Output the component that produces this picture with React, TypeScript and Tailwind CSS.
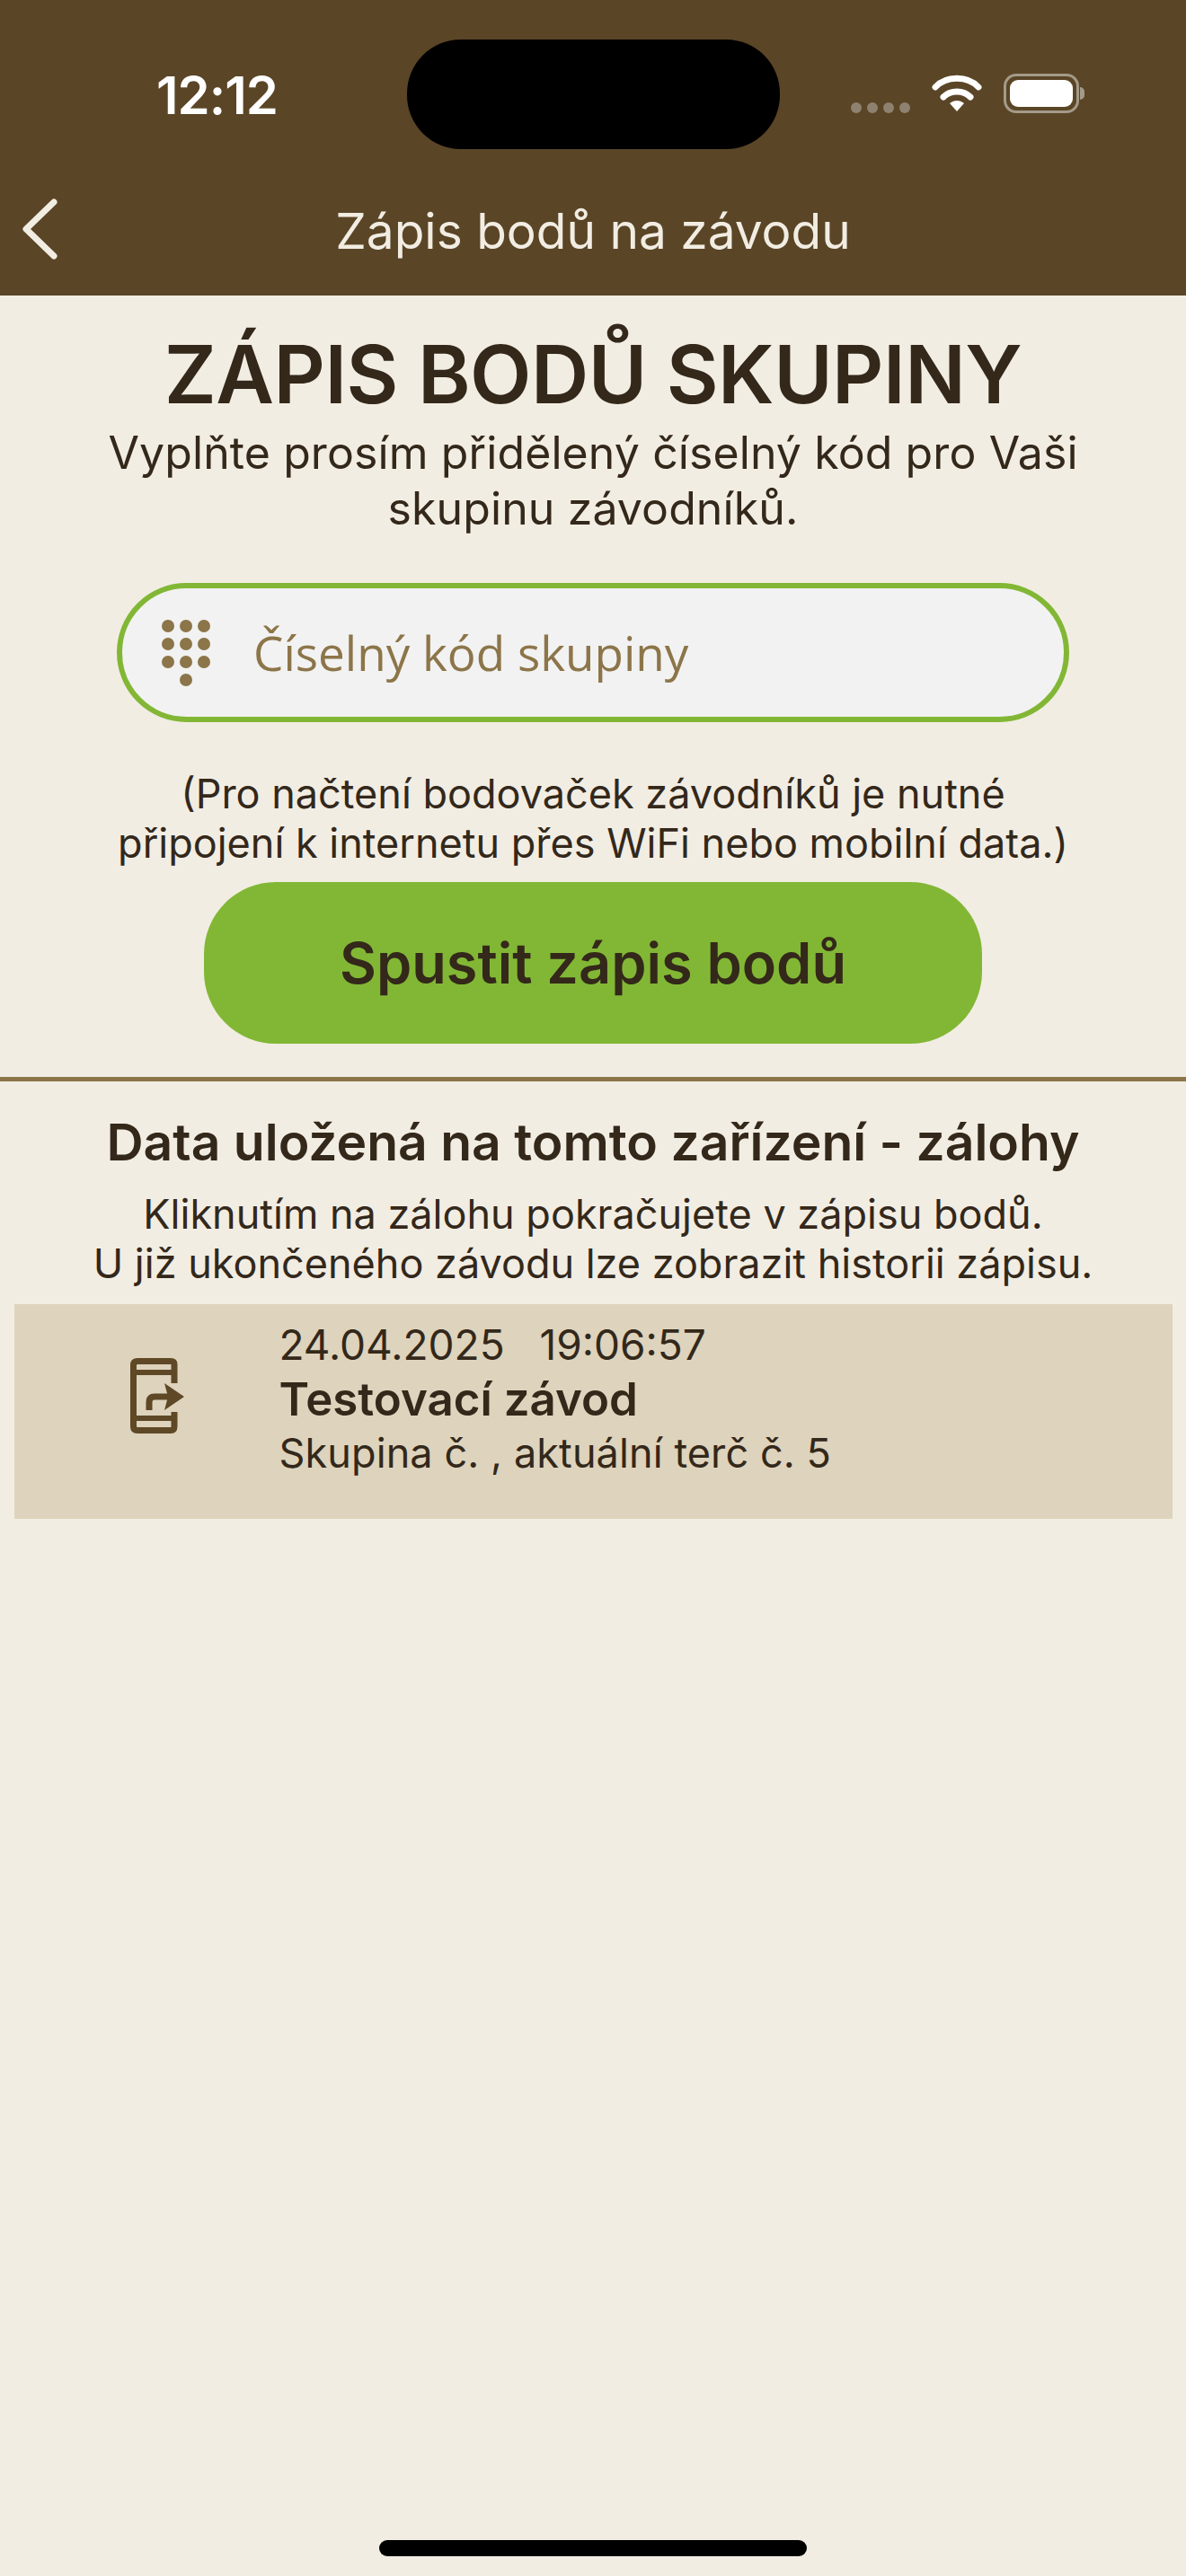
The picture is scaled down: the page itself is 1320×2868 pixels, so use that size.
import React from 'react';

const StatusBar = () => {
  return (
    <div className="relative flex h-[200px] items-start justify-between pl-[174px] pr-[113px] pt-[72px]">
      <span className="font-['Inter',sans-serif] text-[58px] leading-[68px] font-semibold tracking-[-1px] text-white">
        12:12
      </span>
      <div className="absolute left-[453px] top-[44px] h-[122px] w-[415px] rounded-[60px] bg-black" />
      <div className="flex items-center pt-[10px]">
        <div className="mr-[24px] mt-[32px] flex gap-[6px]">
          <div className="h-[12px] w-[12px] rounded-full bg-[#8d8270]" />
          <div className="h-[12px] w-[12px] rounded-full bg-[#8d8270]" />
          <div className="h-[12px] w-[12px] rounded-full bg-[#8d8270]" />
          <div className="h-[12px] w-[12px] rounded-full bg-[#8d8270]" />
        </div>
        <svg width="56" height="44" viewBox="0 0 56 44" className="mr-[24px]">
          <path d="M4 15 C16 2 40 2 52 15" fill="none" stroke="#fff" strokeWidth="7" strokeLinecap="round" />
          <path d="M13 26 C21 18 35 18 43 26" fill="none" stroke="#fff" strokeWidth="7" strokeLinecap="round" />
          <path d="M20 33 C25 29 31 29 36 33 L28 42 Z" fill="#fff" />
        </svg>
        <div className="flex items-center">
          <div className="h-[44px] w-[84px] rounded-[14px] border-[3px] border-[#a49a88] p-[4px]">
            <div className="h-full w-full rounded-[9px] bg-white" />
          </div>
          <div className="ml-[1px] h-[14px] w-[5px] rounded-r-full bg-[#a49a88]" />
        </div>
      </div>
    </div>
  );
};

const KeypadIcon = () => {
  return (
    <svg width="56" height="76" viewBox="0 0 56 76" fill="#8c7549">
      <circle cx="8" cy="8" r="7" />
      <circle cx="28" cy="8" r="7" />
      <circle cx="48" cy="8" r="7" />
      <circle cx="8" cy="28" r="7" />
      <circle cx="28" cy="28" r="7" />
      <circle cx="48" cy="28" r="7" />
      <circle cx="8" cy="48" r="7" />
      <circle cx="28" cy="48" r="7" />
      <circle cx="48" cy="48" r="7" />
      <circle cx="28" cy="68" r="7" />
    </svg>
  );
};

const PhoneForwardIcon = () => {
  return (
    <svg width="60" height="84" viewBox="0 0 60 84" fill="none" stroke="#5e4826" strokeWidth="7">
      <path d="M49 28 V7 Q49 3.500 45 3.500 H8 Q3.500 3.500 3.500 8 V76 Q3.500 80.500 8 80.500 H45 Q49 80.500 49 76 V60" strokeLinejoin="round" />
      <path d="M4 16 H49 M4 67 H49" strokeWidth="6" />
      <path d="M21 58 V49 Q21 43 27 43 H44" strokeWidth="7" />
      <path d="M38 28 L60 43 L38 58 L42 43 Z" fill="#5e4826" stroke="none" />
    </svg>
  );
};

const App = () => {
  return (
    <div className="flex h-[2868px] w-[1320px] flex-col overflow-hidden bg-[#f2ede3] font-['Inter',sans-serif] text-[#33281a]">
      <header className="h-[329px] bg-[#5a4526]">
        <StatusBar />
        <div className="relative flex h-[115px] items-center justify-center pb-[2px]">
          <svg width="44" height="70" viewBox="0 0 44 70" fill="none" stroke="#f2ede3" strokeWidth="7" strokeLinecap="round" strokeLinejoin="round" className="absolute left-[22px] top-[20px]">
            <path d="M38 5 L7 35 L38 65" />
          </svg>
          <h1 className="text-[55px] leading-[64px] font-normal text-[#f2ede3]">Zápis bodů na závodu</h1>
        </div>
      </header>

      <main className="flex flex-col items-center">
        <h2 className="mt-[42px] text-[89px] leading-[92px] font-semibold tracking-[-0.5px]">ZÁPIS BODŮ SKUPINY</h2>
        <p className="mt-[10px] text-center text-[50px] leading-[62px] tracking-[0.1px]">
          Vyplňte prosím přidělený číselný kód pro Vaši
          <br />
          skupinu závodníků.
        </p>

        <div className="mt-[52px] flex h-[155px] w-[1060px] items-center rounded-[78px] border-[6px] border-[#82b735] bg-[#f2f2f2] pl-[43px]">
          <KeypadIcon />
          <span className="ml-[47px] font-['Open_Sans',sans-serif] text-[53px] leading-[64px] text-[#8c7549]">
            Číselný kód skupiny
          </span>
        </div>

        <p className="mt-[52px] text-center text-[45px] leading-[55px]">
          (Pro načtení bodovaček závodníků je nutné
          <br />
          připojení k internetu přes WiFi nebo mobilní data.)
        </p>

        <button className="mt-[16px] flex h-[180px] w-[866px] items-center justify-center rounded-[80px] bg-[#82b735] text-[63px] font-semibold">
          Spustit zápis bodů
        </button>

        <div className="mt-[37px] h-[5px] w-full bg-[#8c7549]" />

        <h3 className="mt-[36px] text-[57px] leading-[64px] font-semibold">Data uložená na tomto zařízení - zálohy</h3>
        <p className="mt-[20px] text-center text-[45px] leading-[55px]">
          Kliknutím na zálohu pokračujete v zápisu bodů.
          <br />
          U již ukončeného závodu lze zobrazit historii zápisu.
        </p>

        <div className="mt-[18px] flex h-[239px] w-[1289px] items-start bg-[#ded3bc]">
          <div className="w-[129px] shrink-0 pt-[60px] pl-[129px]">
            <PhoneForwardIcon />
          </div>
          <div className="ml-[166px] pt-[16px]">
            <p className="whitespace-pre text-[46px] leading-[58px]">24.04.2025   19:06:57</p>
            <p className="mt-[2px] text-[51px] leading-[60px] font-semibold">Testovací závod</p>
            <p className="mt-[3px] text-[45px] leading-[54px] tracking-[0.1px]">Skupina č. , aktuální terč č. 5</p>
          </div>
        </div>
      </main>

      <div className="mt-auto mb-[22px] flex justify-center">
        <div className="h-[18px] w-[476px] rounded-full bg-black" />
      </div>
    </div>
  );
};

export default App;
